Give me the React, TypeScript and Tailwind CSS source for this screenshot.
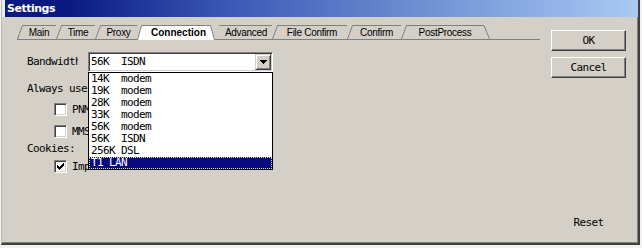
import React from 'react';

const MONO =
  "font-['DejaVu_Sans_Mono','Liberation_Mono',monospace] text-[11px] tracking-[-0.62px] leading-[12px] text-black";

type Tab = { label: string; w: string; width: number; sel?: boolean; noLeft?: boolean; last?: boolean };

const TABS: Tab[] = [
  { label: 'Main', w: 'w-[39px]', width: 39 },
  { label: 'Time', w: 'w-[39px]', width: 39 },
  { label: 'Proxy', w: 'w-[42px]', width: 42 },
  { label: 'Connection', w: 'w-[78px]', width: 78, sel: true },
  { label: 'Advanced', w: 'w-[57px]', width: 57, noLeft: true },
  { label: 'File Confirm', w: 'w-[75px]', width: 75 },
  { label: 'Confirm', w: 'w-[54px]', width: 54 },
  { label: 'PostProcess', w: 'w-[89px]', width: 89, last: true },
];

const ITEMS = ['14K  modem', '19K  modem', '28K  modem', '33K  modem', '56K  modem', '56K  ISDN', '256K DSL', 'T1 LAN'];

function TabItem({ t }: { t: Tab }) {
  const w = t.width;
  let outline: React.ReactNode;
  if (t.sel) {
    outline = (
      <>
        <path d={`M0 15L4.5 0.5H${w - 4.5}L${w} 15Z`} fill="#ffffff" />
        <path d={`M0.5 15L4.5 0.5H${w - 4.5}L${w - 0.5} 15`} stroke="#808080" fill="none" />
      </>
    );
  } else if (t.last) {
    outline = <path d={`M0.5 14L5.5 0.5H${w - 6}L${w - 0.5} 14`} stroke="#808080" fill="none" />;
  } else if (t.noLeft) {
    outline = <path d={`M4 0.5H${w}`} stroke="#808080" fill="none" />;
  } else {
    outline = <path d={`M0.5 14L5.5 0.5H${w}`} stroke="#808080" fill="none" />;
  }
  return (
    <div className={`relative shrink-0 ${t.w} ${t.sel ? 'z-10 -mb-px h-[15px]' : 'h-[14px]'}`}>
      <svg className="absolute left-0 top-0 overflow-visible" width={w} height={t.sel ? 15 : 14}>
        {outline}
      </svg>
      <div
        className={`relative flex h-[14px] items-center justify-center whitespace-nowrap pl-[5px] font-['Liberation_Sans',Arial,sans-serif] text-[10px] text-black ${
          t.sel ? 'font-bold' : 'tracking-[-0.3px]'
        } ${t.last ? 'pr-[6px]' : ''}`}
      >
        {t.label}
      </div>
    </div>
  );
}

function CheckBox({ checked }: { checked?: boolean }) {
  return (
    <div className="flex h-[13px] w-[13px] shrink-0 items-center justify-center border border-t-[#808080] border-l-[#808080] border-r-white border-b-white bg-white shadow-[inset_1px_1px_0_#404040,inset_-1px_-1px_0_#d4d0c8]">
      {checked && (
        <svg width="7" height="7" viewBox="0 0 7 7" shapeRendering="crispEdges">
          <rect x="6" y="0" width="1" height="1" />
          <rect x="5" y="1" width="2" height="1" />
          <rect x="0" y="2" width="1" height="1" />
          <rect x="4" y="2" width="3" height="1" />
          <rect x="0" y="3" width="2" height="1" />
          <rect x="3" y="3" width="3" height="1" />
          <rect x="0" y="4" width="5" height="1" />
          <rect x="1" y="5" width="3" height="1" />
          <rect x="2" y="6" width="1" height="1" />
        </svg>
      )}
    </div>
  );
}

function Combo() {
  return (
    <div className="relative h-[20px] w-[185px] shrink-0 border border-t-[#808080] border-l-[#808080] border-r-white border-b-white bg-white p-px shadow-[inset_1px_1px_0_#404040,inset_-1px_-1px_0_#d4d0c8]">
      <div className="flex h-full">
        <div className={`flex flex-1 items-center whitespace-pre pl-[1px] ${MONO}`}>56K  ISDN</div>
        <div className="flex h-full w-[16px] items-center justify-center border border-t-[#d4d0c8] border-l-[#d4d0c8] border-r-[#404040] border-b-[#404040] bg-[#d4d0c8] shadow-[inset_1px_1px_0_#ffffff,inset_-1px_-1px_0_#808080]">
          <svg width="7" height="4" viewBox="0 0 7 4" shapeRendering="crispEdges">
            <rect x="0" y="0" width="7" height="1" />
            <rect x="1" y="1" width="5" height="1" />
            <rect x="2" y="2" width="3" height="1" />
            <rect x="3" y="3" width="1" height="1" />
          </svg>
        </div>
      </div>
      <div className="absolute left-[-1px] top-[19px] z-20 w-[185px] border border-black bg-white">
        {ITEMS.map((it, i) =>
          i === ITEMS.length - 1 ? (
            <div
              key={it}
              className={`h-[12px] whitespace-pre bg-[#0a0a80] pl-[2px] outline-1 outline-dotted -outline-offset-1 outline-[#e8e8b0] ${MONO} text-white`}
            >
              <span className="text-white">{it}</span>
            </div>
          ) : (
            <div key={it} className={`h-[12px] whitespace-pre pl-[2px] ${MONO}`}>
              {it}
            </div>
          )
        )}
      </div>
    </div>
  );
}

function Button({ label }: { label: string }) {
  return (
    <div
      className={`flex h-[21px] w-[75px] items-center justify-center border border-t-white border-l-white border-r-[#404040] border-b-[#404040] bg-[#d4d0c8] shadow-[inset_-1px_-1px_0_#808080] ${MONO}`}
    >
      {label}
    </div>
  );
}

export default function App() {
  return (
    <div className="h-[248px] w-[642px] overflow-hidden bg-[#f2f2f2]">
      <div className="ml-[1px] flex h-[245px] w-[639px] flex-col border-l border-l-[#b8b8b8] border-r-2 border-b-2 border-r-[#404040] border-b-[#404040] bg-[#d4d0c8] shadow-[inset_-1px_-1px_0_#808080]">
        <div className="flex h-[17px] shrink-0 bg-[#ececec] pl-[3px]">
          <div className="flex h-[17px] flex-1 items-center bg-[linear-gradient(90deg,#0a1a80_0%,#0a1a80_10%,#3a58b6_35%,#5d7cc8_55%,#7f9fdc_75%,#98b8ec_90%,#aacaf2_100%)] pl-[2px]">
            <span className="font-['DejaVu_Sans',Verdana,sans-serif] text-[11px] font-bold leading-none tracking-[-0.5px] text-white">
              Settings
            </span>
          </div>
        </div>
        <div className="flex h-[226px] shrink-0">
          <div className="flex flex-1 flex-col">
            <div className="ml-[15px] mt-[8px] flex h-[15px] w-[523px] items-end border-b border-b-[#808080]">
              {TABS.map((t) => (
                <TabItem key={t.label} t={t} />
              ))}
            </div>
            <div className="mt-[12px] flex h-[20px] items-center pl-[25px]">
              <div className="w-[61px] shrink-0">
                <div className={`w-[51px] overflow-hidden whitespace-nowrap ${MONO}`}>Bandwidth:</div>
              </div>
              <Combo />
            </div>
            <div className={`mt-[11px] whitespace-nowrap pl-[25px] ${MONO}`}>Always use</div>
            <div className="mt-[8px] flex items-center gap-[5px] pl-[52px]">
              <CheckBox />
              <span className={MONO}>PNM</span>
            </div>
            <div className="mt-[9px] flex items-center gap-[5px] pl-[52px]">
              <CheckBox />
              <span className={MONO}>MMS</span>
            </div>
            <div className={`mt-[5px] whitespace-nowrap pl-[25px] ${MONO}`}>Cookies:</div>
            <div className="mt-[5px] flex items-center gap-[5px] pl-[52px]">
              <CheckBox checked />
              <span className={MONO}>Import</span>
            </div>
          </div>
          <div className="mr-[12px] flex w-[75px] shrink-0 flex-col pb-[10px] pt-[13px]">
            <Button label="OK" />
            <div className="mt-[6px]">
              <Button label="Cancel" />
            </div>
            <div className={`mt-auto flex h-[21px] w-[75px] items-center justify-center ${MONO}`}>Reset</div>
          </div>
        </div>
      </div>
    </div>
  );
}
